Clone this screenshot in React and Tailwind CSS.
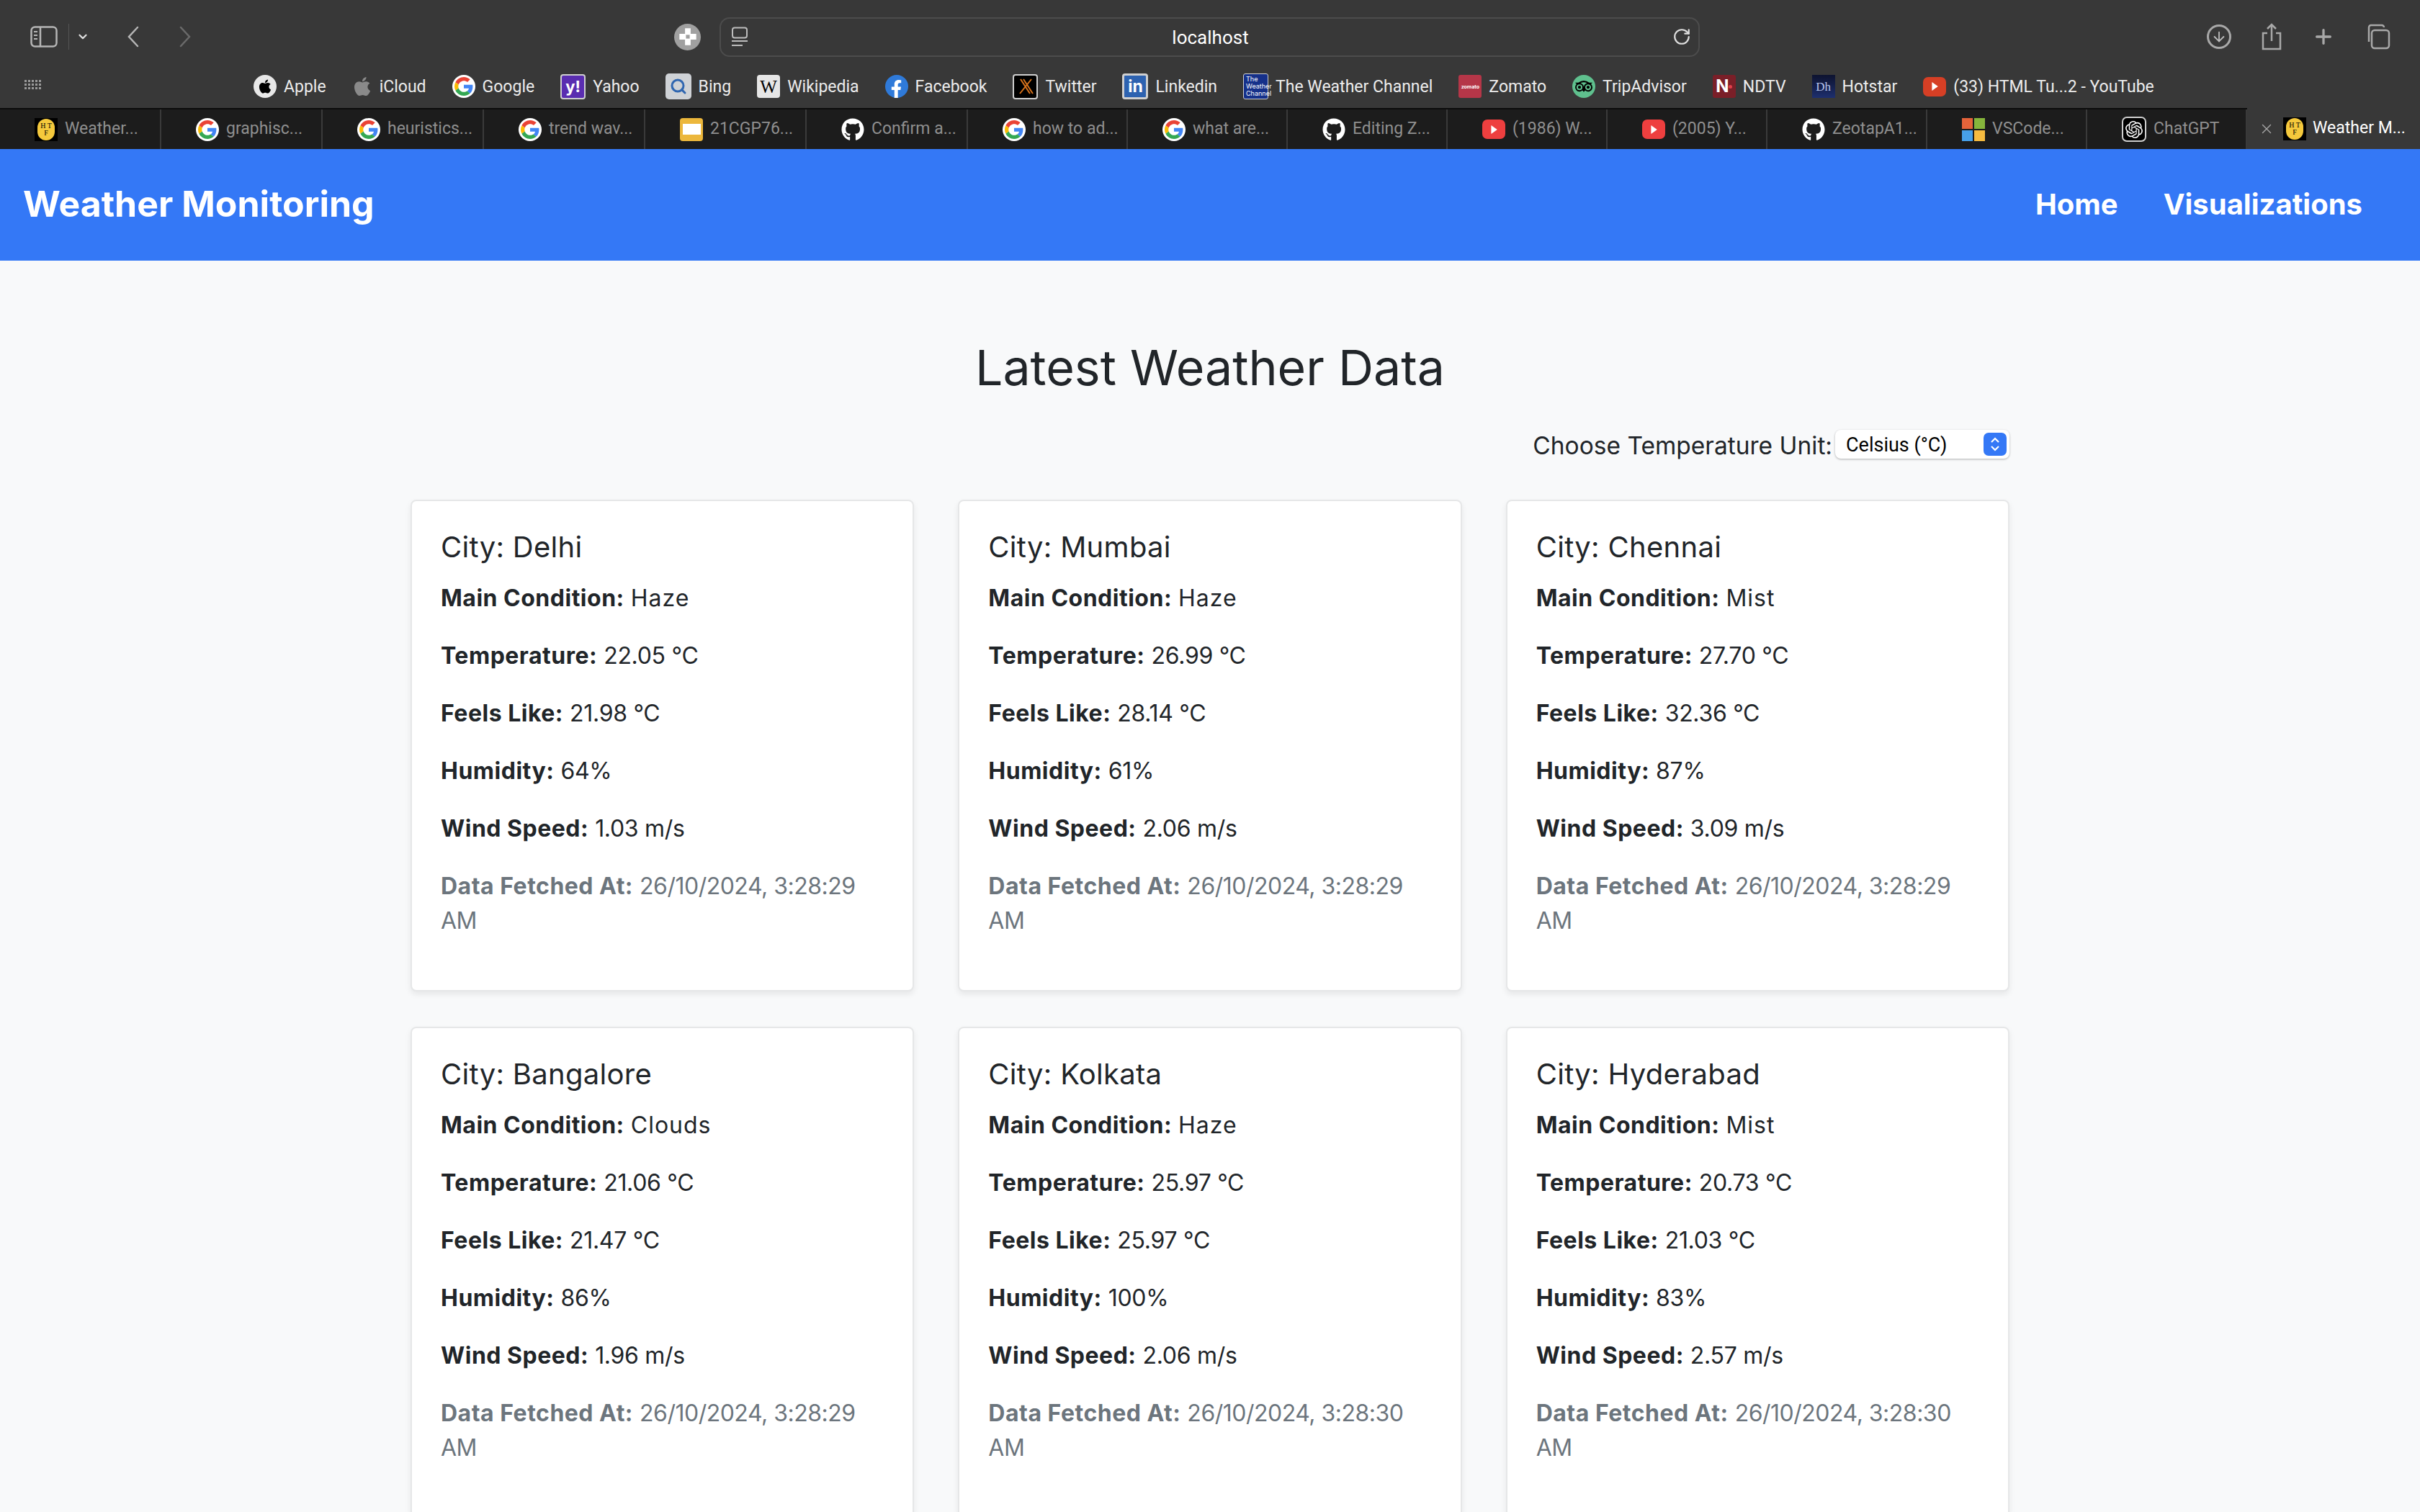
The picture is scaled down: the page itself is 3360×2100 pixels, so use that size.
import React from 'react';
import { ChevronDown, RotateCw, Plus, ArrowDown, Search, X } from 'lucide-react';
import { FaApple, FaGithub, FaFacebookF, FaTripadvisor } from 'react-icons/fa';
import { SiOpenai } from 'react-icons/si';

const GoogleIcon = () => (
    <span className="w-[32px] h-[32px] rounded-full bg-white flex items-center justify-center shrink-0">
        <svg viewBox="0 0 48 48" className="w-[26px] h-[26px]">
            <path fill="#EA4335" d="M24 9.5c3.5 0 6.7 1.2 9.2 3.6l6.9-6.9C35.9 2.4 30.5 0 24 0 14.6 0 6.5 5.4 2.6 13.2l8 6.2C12.5 13.7 17.8 9.5 24 9.5z" />
            <path fill="#4285F4" d="M46.9 24.5c0-1.6-.1-3.1-.4-4.5H24v9h12.9c-.6 3-2.2 5.500-4.800 7.200l7.700 6c4.500-4.200 7.100-10.300 7.100-17.700z" />
            <path fill="#FBBC05" d="M10.600 28.600c-.5-1.500-.8-3-.8-4.600s.3-3.100.8-4.600l-8-6.200C.9 16.500 0 20.100 0 24s.9 7.500 2.600 10.800l8-6.200z" />
            <path fill="#34A853" d="M24 48c6.500 0 11.900-2.100 15.900-5.800l-7.700-6c-2.200 1.400-4.900 2.300-8.200 2.300-6.200 0-11.500-4.200-13.400-9.900l-8 6.200C6.500 42.600 14.600 48 24 48z" />
        </svg>
    </span>
);

const HftIcon = () => (
    <span className="w-[32px] h-[32px] bg-black flex items-center justify-center shrink-0">
        <span className="w-[24px] h-[30px] rounded-full bg-[#f5c93c] text-black text-[10px] leading-[10px] font-['Liberation_Serif',serif] flex flex-col items-center justify-center">
            <span>H T</span>
            <span>F</span>
        </span>
    </span>
);

const GithubIcon = () => (
    <span className="w-[32px] h-[32px] flex items-center justify-center shrink-0 text-white">
        <FaGithub size={32} />
    </span>
);

const YoutubeIcon = ({ color = 'bg-[#ee3f3f]' }) => (
    <span className={`w-[32px] h-[27px] rounded-[7px] ${color} flex items-center justify-center shrink-0`}>
        <svg viewBox="0 0 10 10" className="w-[12px] h-[12px]"><path fill="#fff" d="M2 0l7 5-7 5z" /></svg>
    </span>
);

const SlidesIcon = () => (
    <span className="w-[32px] h-[32px] rounded-[4px] bg-[#ecb73c] flex items-center justify-center shrink-0">
        <span className="w-[25px] h-[15px] bg-white" />
    </span>
);

const MicrosoftIcon = () => (
    <span className="w-[32px] h-[32px] grid grid-cols-2 gap-[2px] shrink-0">
        <span className="bg-[#e5633a]" />
        <span className="bg-[#86b53c]" />
        <span className="bg-[#47a0e8]" />
        <span className="bg-[#f6bb40]" />
    </span>
);

const ChatIcon = () => (
    <span className="w-[34px] h-[35px] rounded-[7px] bg-black border-2 border-[#cfcfcf] flex items-center justify-center shrink-0 text-white">
        <SiOpenai size={24} />
    </span>
);

const tabs = [
    { icon: <HftIcon />, text: 'Weather...' },
    { icon: <GoogleIcon />, text: 'graphisc...' },
    { icon: <GoogleIcon />, text: 'heuristics...' },
    { icon: <GoogleIcon />, text: 'trend wav...' },
    { icon: <SlidesIcon />, text: '21CGP76...' },
    { icon: <GithubIcon />, text: 'Confirm a...' },
    { icon: <GoogleIcon />, text: 'how to ad...' },
    { icon: <GoogleIcon />, text: 'what are...' },
    { icon: <GithubIcon />, text: 'Editing Z...' },
    { icon: <YoutubeIcon />, text: '(1986) W...' },
    { icon: <YoutubeIcon />, text: '(2005) Y...' },
    { icon: <GithubIcon />, text: 'ZeotapA1...' },
    { icon: <MicrosoftIcon />, text: 'VSCode...' },
    { icon: <ChatIcon />, text: 'ChatGPT' },
];

const bookmarks = [
    { name: 'Apple', icon: <span className="w-[32px] h-[32px] rounded-full bg-[#e8e8e8] flex items-center justify-center text-black"><FaApple size={22} /></span> },
    { name: 'iCloud', icon: <span className="w-[28px] h-[32px] flex items-center justify-center text-[#8a8a8a]"><FaApple size={30} /></span> },
    { name: 'Google', icon: <GoogleIcon /> },
    { name: 'Yahoo', icon: <span className="w-[35px] h-[35px] rounded-[4px] bg-[#5a2db0] border-2 border-[#cfcfcf] flex items-center justify-center text-white text-[22px] font-bold leading-none">y!</span> },
    { name: 'Bing', icon: <span className="w-[36px] h-[36px] rounded-[5px] bg-[#cfd2d6] flex items-center justify-center text-[#2f66b0]"><Search size={24} strokeWidth={3} /></span> },
    { name: 'Wikipedia', icon: <span className="w-[32px] h-[32px] rounded-[4px] bg-[#e6e6e6] flex items-center justify-center text-black text-[25px] leading-none font-['Liberation_Serif',serif]">W</span> },
    { name: 'Facebook', icon: <span className="w-[32px] h-[32px] rounded-full bg-[#2f7ad9] flex items-end justify-center text-white"><FaFacebookF size={25} /></span> },
    {
        name: 'Twitter',
        icon: (
            <span className="w-[35px] h-[35px] rounded-[4px] bg-black border-2 border-[#cfcfcf] flex items-center justify-center">
                <svg viewBox="0 0 24 24" className="w-[24px] h-[24px]" fill="none" stroke="#d9731c" strokeWidth="2">
                    <path d="M5 2l13 20M9 2l13 20M20 2L4 22" />
                </svg>
            </span>
        ),
    },
    { name: 'Linkedin', icon: <span className="w-[36px] h-[36px] rounded-[4px] bg-[#2d62b0] border-[3px] border-[#cfcfcf] flex items-center justify-center text-white text-[23px] font-bold leading-none">in</span> },
    {
        name: 'The Weather Channel',
        icon: (
            <span className="w-[35px] h-[36px] rounded-[3px] bg-[#15308a] border border-[#cfcfcf] flex flex-col justify-center pl-[3px] text-white text-[9px] leading-[10px]">
                <span>The</span>
                <span>Weather</span>
                <span>Channel</span>
            </span>
        ),
    },
    { name: 'Zomato', icon: <span className="w-[32px] h-[32px] rounded-[3px] bg-[#b53648] flex items-center justify-center text-white text-[7px] font-bold leading-none">zomato</span> },
    { name: 'TripAdvisor', icon: <span className="w-[32px] h-[32px] rounded-full bg-[#5fc08e] flex items-center justify-center text-black"><FaTripadvisor size={24} /></span> },
    {
        name: 'NDTV',
        icon: (
            <span className="w-[32px] h-[32px] rounded-[3px] bg-[#7a1f28] flex items-center justify-center text-white text-[24px] font-bold leading-none">
                N<span className="w-[5px] h-[5px] rounded-full bg-[#e0404a]" />
            </span>
        ),
    },
    { name: 'Hotstar', icon: <span className="w-[32px] h-[32px] bg-gradient-to-b from-[#0d1330] to-[#1d2f6e] flex items-center justify-center text-[#b9c7ee] text-[17px] leading-none font-['Liberation_Serif',serif]">Dh</span> },
    { name: '(33) HTML Tu...2 - YouTube', icon: <YoutubeIcon color="bg-[#d63f25]" /> },
];

const cities = [
    { city: 'Delhi', cond: 'Haze', temp: '22.05', feels: '21.98', hum: '64', wind: '1.03', time: '3:28:29' },
    { city: 'Mumbai', cond: 'Haze', temp: '26.99', feels: '28.14', hum: '61', wind: '2.06', time: '3:28:29' },
    { city: 'Chennai', cond: 'Mist', temp: '27.70', feels: '32.36', hum: '87', wind: '3.09', time: '3:28:29' },
    { city: 'Bangalore', cond: 'Clouds', temp: '21.06', feels: '21.47', hum: '86', wind: '1.96', time: '3:28:29' },
    { city: 'Kolkata', cond: 'Haze', temp: '25.97', feels: '25.97', hum: '100', wind: '2.06', time: '3:28:30' },
    { city: 'Hyderabad', cond: 'Mist', temp: '20.73', feels: '21.03', hum: '83', wind: '2.57', time: '3:28:30' },
];

const Toolbar = () => (
    <div className="h-[150px] flex flex-col text-[#bdbdbd]">
        <div className="h-[102px] flex items-center pl-[42px] pr-[41px]">
            <svg viewBox="0 0 38 30" className="w-[38px] h-[30px] shrink-0" fill="none" stroke="#b5b5b5" strokeWidth="2.500">
                <rect x="1.500" y="1.500" width="35" height="27" rx="5" />
                <path d="M14 2v26" />
                <path d="M5 8h5M5 13h5M5 18h5" strokeWidth="2" />
            </svg>
            <span className="w-[1px] h-[36px] bg-[#555] ml-[15px]" />
            <ChevronDown size={18} strokeWidth={3} className="ml-[10px] text-[#e0e0e0]" />
            <svg viewBox="0 0 18 30" className="w-[18px] h-[30px] ml-[52px]" fill="none" stroke="#b5b5b5" strokeWidth="2.500" strokeLinecap="round">
                <path d="M15 2L3 15l12 13" />
            </svg>
            <svg viewBox="0 0 18 30" className="w-[18px] h-[30px] ml-[54px]" fill="none" stroke="#6a6a6a" strokeWidth="2.500" strokeLinecap="round">
                <path d="M3 2l12 13L3 28" />
            </svg>
            <span className="w-[37px] h-[37px] rounded-full bg-[#a0a0a0] ml-[670px] flex items-center justify-center">
                <svg viewBox="0 0 20 20" className="w-[26px] h-[26px]">
                    <path fill="#fff" d="M7 1h6v6h6v6h-6v6H7v-6H1V7h6z" />
                    <rect x="8" y="8" width="4" height="4" fill="#a0a0a0" />
                </svg>
            </span>
            <div className="w-[1361px] h-[55px] ml-[26px] rounded-[14px] border-2 border-[#4c4c4c] flex items-center pl-[14px] pr-[10px]">
                <svg viewBox="0 0 24 28" className="w-[24px] h-[28px]" fill="none" stroke="#bdbdbd" strokeWidth="2">
                    <rect x="2" y="1.500" width="20" height="14" rx="3" />
                    <path d="M1 20h22M1 26h15" />
                </svg>
                <span className="flex-1 text-center text-[26px] leading-none pt-[2px] text-white font-['Roboto',sans-serif]">localhost</span>
                <RotateCw size={26} strokeWidth={2} className="text-[#e0e0e0]" />
            </div>
            <div className="ml-auto flex items-center gap-[41px]">
                <span className="w-[34px] h-[34px] rounded-full border-[3px] border-[#a8a8a8] flex items-center justify-center">
                    <ArrowDown size={22} strokeWidth={2} />
                </span>
                <svg viewBox="0 0 30 38" className="w-[30px] h-[38px]" fill="none" stroke="#a8a8a8" strokeWidth="2.500">
                    <path d="M9 14H3v22h24V14h-6M15 25V2M9 8l6-6 6 6" />
                </svg>
                <Plus size={32} strokeWidth={2.500} className="text-[#a8a8a8]" />
                <svg viewBox="0 0 36 36" className="w-[36px] h-[36px]" fill="none" stroke="#a8a8a8" strokeWidth="2.500">
                    <path d="M6 25V5a3 3 0 0 1 3-3h15a3 3 0 0 1 3 3" />
                    <rect x="10" y="9" width="24" height="25" rx="4" />
                </svg>
            </div>
        </div>
        <div className="h-[48px] flex items-start pl-[34px]">
            <div className="grid grid-cols-5 gap-[2px] w-[23px] mt-[9px] shrink-0">
                {Array.from({ length: 15 }).map((_, i) => (
                    <span key={i} className="h-[3px] bg-[#9a9a9a]" />
                ))}
            </div>
            <div className="flex items-center gap-[36px] ml-[295px] h-[36px]">
                {bookmarks.map((b) => (
                    <div key={b.name} className="flex items-center gap-[10px]">
                        {b.icon}
                        <span className="text-[23px] leading-none text-[#ececec] whitespace-nowrap font-['Roboto',sans-serif]">{b.name}</span>
                    </div>
                ))}
            </div>
        </div>
    </div>
);

const TabBar = () => (
    <div className="h-[57px] flex bg-[#1c1c1c] border-t-2 border-[#0c0c0c] font-['Roboto',sans-serif]">
        {tabs.map((t, i) => (
            <div key={t.text} className={`${i < 6 ? 'w-[224px]' : 'w-[222px]'} pl-[48px] flex items-center gap-[10px] border-r-2 border-[#3a3a3a] shrink-0 overflow-hidden`}>
                {t.icon}
                <span className="text-[23px] text-[#8f8f8f] whitespace-nowrap">{t.text}</span>
            </div>
        ))}
        <div className="flex-1 -mt-[2px] bg-[#383838] flex items-center pl-[16px]">
            <X size={22} strokeWidth={1.500} className="text-[#a8a8a8]" />
            <span className="ml-[12px]"><HftIcon /></span>
            <span className="ml-[9px] text-[23px] text-white whitespace-nowrap">Weather M...</span>
        </div>
    </div>
);

const Field = ({ label, wide, children }) => (
    <p className="mb-[32px] text-[32px] leading-[48px]">
        <strong className="font-bold tracking-[0.5px]">{label}:</strong>{' '}
        <span className={wide ? 'tracking-[1px]' : 'tracking-[-0.3px]'}>{children}</span>
    </p>
);

const CityCard = ({ d }) => (
    <div className="h-[683px] bg-white border-2 border-[#e6e7e8] rounded-[8px] p-[40px] shadow-[0_4px_8px_rgba(0,0,0,0.075)] text-[#212529]">
        <h5 className="text-[40px] leading-[48px] mb-[23px] tracking-[0.3px]">City: {d.city}</h5>
        <Field label="Main Condition" wide>{d.cond}</Field>
        <Field label="Temperature">{d.temp} °C</Field>
        <Field label="Feels Like">{d.feels} °C</Field>
        <Field label="Humidity">{d.hum}%</Field>
        <Field label="Wind Speed">{d.wind} m/s</Field>
        <p className="text-[32px] leading-[48px] text-[#6c757d]">
            <strong className="font-bold tracking-[0.5px]">Data Fetched At:</strong>{' '}
            <span className="tracking-[-0.5px]">26/10/2024, {d.time} AM</span>
        </p>
    </div>
);

const App = () => {
    return (
        <div className="h-[2100px] overflow-hidden bg-[#383838] font-['Inter',sans-serif]">
            <Toolbar />
            <TabBar />
            <nav className="h-[155px] bg-[#3478f6] flex items-center justify-between pl-[32px] pr-[80px] text-white font-bold">
                <span className="text-[50px] leading-none pb-[3px]">Weather Monitoring</span>
                <div className="flex items-center gap-[63px] text-[40px] leading-none pb-[2px]">
                    <span>Home</span>
                    <span>Visualizations</span>
                </div>
            </nav>
            <main className="bg-[#f8f9fa] h-full">
                <div className="w-[2280px] mx-auto px-[30px] pt-[110px]">
                    <h1 className="text-[68px] leading-[77px] text-center text-[#212529]">Latest Weather Data</h1>
                    <div className="flex justify-end items-center mt-[48px] mb-[57px] h-[40px]">
                        <label className="text-[33.5px] text-[#212529] mr-[4px] pt-[5px]">Choose Temperature Unit:</label>
                        <div className="w-[242px] h-[40px] bg-white rounded-[8px] shadow-[0_1px_3px_rgba(0,0,0,0.3)] flex items-center pl-[15px] pr-[4px]">
                            <span className="flex-1 text-[27px] leading-none text-black font-['Roboto',sans-serif] pt-[2px]">Celsius (°C)</span>
                            <span className="w-[32px] h-[32px] rounded-[7px] bg-[#3478f6] flex items-center justify-center">
                                <svg viewBox="0 0 16 20" className="w-[16px] h-[22px]" fill="none" stroke="#fff" strokeWidth="2.200">
                                    <path d="M3 7l5-5 5 5M3 13l5 5 5-5" />
                                </svg>
                            </span>
                        </div>
                    </div>
                    <div className="grid grid-cols-3 gap-x-[61px] gap-y-[49px]">
                        {cities.map((d) => (
                            <CityCard key={d.city} d={d} />
                        ))}
                    </div>
                </div>
            </main>
        </div>
    );
};

export default App;
